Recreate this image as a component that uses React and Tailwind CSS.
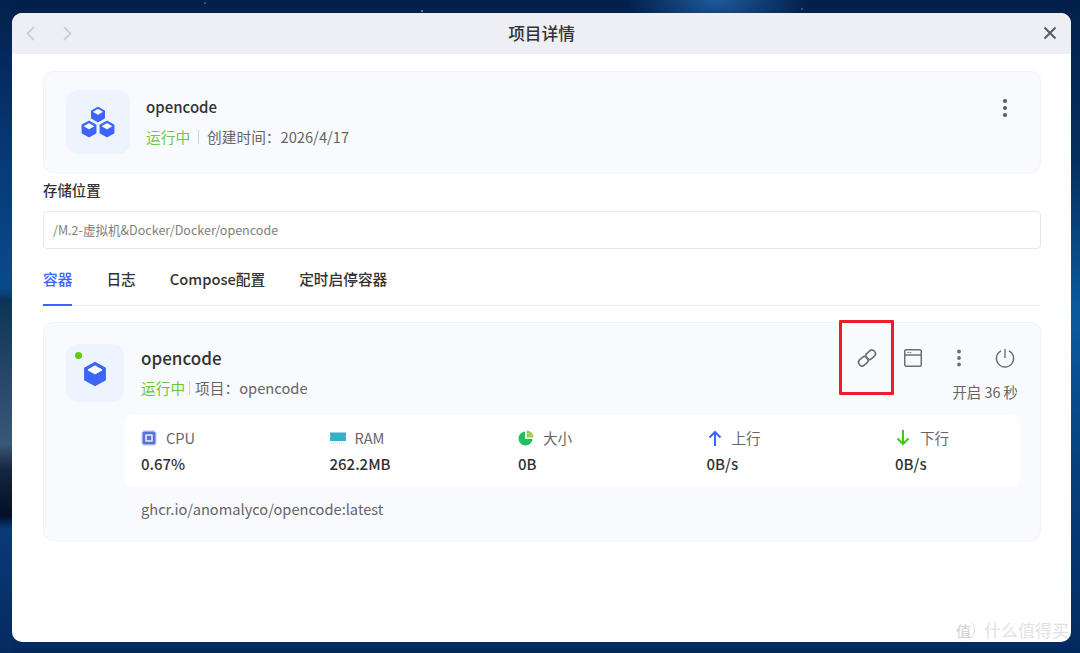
import React from "react";

const font = { fontFamily: '"Noto Sans CJK SC", "Noto Sans", sans-serif' };

function Cube({ x, y, s = 1 }) {
  return (
    <g transform={`translate(${x} ${y}) scale(${s})`}>
      <path d="M0 -9 L8 -4.5 V4.5 L0 9 L-8 4.5 V-4.5 Z" fill="#3d64fb" stroke="#3d64fb" strokeWidth="1.5" strokeLinejoin="round" />
      <path d="M0 -6.5 L5.6 -3.3 L0 0 L-5.6 -3.3 Z" fill="#fff" stroke="#fff" strokeWidth="0.8" strokeLinejoin="round" />
    </g>
  );
}

function Stat({ icon, label, value, className }) {
  return (
    <div className={className}>
      <div className="flex h-5 items-center gap-[9px] text-[14.6px] leading-5 text-[#666]">
        <span className="flex h-4 w-4 shrink-0 items-center justify-center">{icon}</span>
        <span>{label}</span>
      </div>
      <div className="mt-[6px] text-[15px] font-medium leading-5 text-[#333]">{value}</div>
    </div>
  );
}

const CpuIcon = (
  <svg width="16" height="16" viewBox="0 0 16 16">
    <path d="M3 0V16M5 0V16M7 0V16M9 0V16M11 0V16M13 0V16M0 3H16M0 5H16M0 7H16M0 9H16M0 11H16M0 13H16" stroke="#9fb0ee" strokeWidth="0.7" />
    <rect x="1.5" y="1.5" width="13" height="13" rx="1.5" fill="#5a72d8" />
    <rect x="4.2" y="4.2" width="7.6" height="7.6" rx="1" fill="#e4eafc" />
    <rect x="5.8" y="5.8" width="4.4" height="4.4" fill="#5a72d8" />
  </svg>
);
const RamIcon = (
  <svg width="16" height="16" viewBox="0 0 16 16">
    <path d="M0 2.5H16V5.5L15.2 6.4L16 7.3V11H0V7.3L0.8 6.4L0 5.5Z" fill="#35b1c6" />
    <path d="M1 13H15" stroke="#9fd8e2" strokeWidth="1.2" strokeDasharray="1 1" />
  </svg>
);
const PieIcon = (
  <svg width="16" height="16" viewBox="0 0 16 16">
    <path d="M7 1.5A7 7 0 1 0 14.5 9H7Z" fill="#1fc15e" />
    <path d="M8.6 0.5A7 7 0 0 1 15.5 7.4H8.6Z" fill="#9ed24a" />
  </svg>
);
const UpIcon = (
  <svg width="16" height="16" viewBox="0 0 16 16" fill="none" stroke="#3d64fb" strokeWidth="2">
    <path d="M8 16V2M2.5 7.5L8 2L13.5 7.5" />
  </svg>
);
const DownIcon = (
  <svg width="16" height="16" viewBox="0 0 16 16" fill="none" stroke="#3fc90f" strokeWidth="2">
    <path d="M8 0V14M2.5 8.5L8 14L13.5 8.5" />
  </svg>
);

export default function App() {
  return (
    <div
      style={font}
      className="relative h-[653px] w-[1080px] overflow-hidden bg-[radial-gradient(ellipse_90px_40px_at_717px_0px,#1d5a9a_0%,transparent_100%),radial-gradient(circle_1.5px_at_422px_11px,#8fd0ff_0%,transparent_100%),radial-gradient(circle_1px_at_205px_3px,#9cc4ee_0%,transparent_100%),radial-gradient(circle_1px_at_802px_9px,#9cc4ee_0%,transparent_100%),linear-gradient(180deg,#03204c_0%,#06305f_25%,#0a5aa0_48%,#07427f_70%,#032a60_100%)] pb-[11px] pl-[12px] pr-[9px] pt-[13px]"
    >
      {/* Wallpaper's darker band on the left */}
      <div className="absolute left-0 top-0 h-full w-[12px] bg-[linear-gradient(180deg,#03204c_0%,#073a78_25%,#0a4a8c_44%,#0b3558_46%,#2c4a6e_60%,#3a5778_68%,#14263f_72%,#020f28_79%,#0a3a78_81%,#052a60_100%)]" />

      <div className="relative flex h-[629px] w-[1059px] flex-col overflow-hidden rounded-[10px] bg-white">
        {/* Title bar */}
        <div className="relative flex h-[41px] shrink-0 items-center justify-between bg-[#eeeff4] pl-[11px] pr-[14px]">
          <div className="flex items-center gap-[22px] text-[#cfcfd3]">
            <svg width="15" height="17" viewBox="0 0 15 17" fill="none" stroke="currentColor" strokeWidth="1.8"><path d="M11 2L4.5 8.5L11 15" /></svg>
            <svg width="15" height="17" viewBox="0 0 15 17" fill="none" stroke="currentColor" strokeWidth="1.8"><path d="M4 2L10.5 8.5L4 15" /></svg>
          </div>
          <div className="absolute inset-x-0 top-0 text-center text-[16.7px] font-medium leading-[41px] text-[#333]">项目详情</div>
          <svg width="14" height="14" viewBox="0 0 14 14" fill="none" stroke="#5c5c5f" strokeWidth="2" className="-mt-[1px]"><path d="M1.5 1.5L12.5 12.5M12.5 1.5L1.5 12.5" /></svg>
        </div>

        {/* Body */}
        <div className="flex flex-col pl-[31px] pr-[30px] pt-[17px]">
          {/* Project card */}
          <div className="flex h-[102px] items-start rounded-[10px] border border-[#f0f2f7] bg-[#f9fafe] pl-[22px] pr-[32px] pt-[18px]">
            <div className="flex h-[64px] w-[64px] shrink-0 items-center justify-center rounded-[12px] bg-[#eef4fe]">
              <svg width="34" height="34" viewBox="0 0 34 34">
                <Cube x={17} y={9.5} s={0.8} />
                <Cube x={8} y={24} s={0.85} />
                <Cube x={26} y={24} s={0.85} />
              </svg>
            </div>
            <div className="ml-[16px] flex flex-1 flex-col">
              <div className="mt-[6px] text-[15px] font-medium leading-[22px] text-[#333]">opencode</div>
              <div className="mt-[9px] flex items-center text-[14.7px] leading-5 text-[#666]">
                <span className="text-[#6ccb3f]">运行中</span>
                <span className="mx-[8px] h-[14px] w-px bg-[#d4d4d4]" />
                <span>创建时间：2026/4/17</span>
              </div>
            </div>
            <svg width="6" height="20" viewBox="0 0 6 20" fill="#58585c" className="mt-[8px] shrink-0">
              <circle cx="3" cy="3" r="2" /><circle cx="3" cy="10" r="2" /><circle cx="3" cy="17" r="2" />
            </svg>
          </div>

          {/* Storage */}
          <div className="mt-[7px] text-[14.4px] font-medium leading-5 text-[#333]">存储位置</div>
          <div className="mt-[11px] flex h-[38px] items-center rounded-[4px] border border-[#e6e7eb] pl-[9px] text-[12.55px] text-[#808080]">
            /M.2-虚拟机&amp;Docker/Docker/opencode
          </div>

          {/* Tabs */}
          <div className="mt-[12px] flex h-[45px] gap-[34px] border-b border-[#eeeff2] text-[14.7px] font-medium text-[#333]">
            <div className="-mb-px flex h-[45px] items-center border-b-2 border-[#3d64fb] pb-[7px] text-[#3d64fb]">容器</div>
            <div className="flex h-[44px] items-center pb-[8px]">日志</div>
            <div className="flex h-[44px] items-center pb-[8px]">Compose配置</div>
            <div className="flex h-[44px] items-center pb-[8px]">定时启停容器</div>
          </div>

          {/* Container card */}
          <div className="mt-[16px] flex h-[219px] flex-col rounded-[10px] border border-[#f0f2f7] bg-[#f9fafe] pl-[22px] pr-[20px] pt-[21px]">
            <div className="flex h-[71px]">
              <div className="relative flex h-[58px] w-[58px] shrink-0 items-center justify-center rounded-[12px] bg-[#eef4fe]">
                <span className="absolute left-[9px] top-[8px] h-[7px] w-[7px] rounded-full bg-[#5fc90c]" />
                <svg width="24" height="26" viewBox="0 0 24 26" className="mt-[1px]"><Cube x={12} y={13} s={1.25} /></svg>
              </div>
              <div className="ml-[17px] flex flex-1 flex-col">
                <div className="mt-[1px] text-[17px] font-medium leading-[26px] text-[#333]">opencode</div>
                <div className="mt-[7px] flex items-center text-[14.7px] leading-5 text-[#666]">
                  <span className="text-[#66c92f]">运行中</span>
                  <span className="ml-[4px] mr-[5px] h-[14px] w-px bg-[#d4d4d4]" />
                  <span>项目：opencode</span>
                </div>
              </div>
              <div className="flex flex-col items-end">
                <div className="flex h-[28px] items-center gap-[16px] text-[#6f6f72]">
                  <span className="flex w-[30px] justify-center">
                    <svg width="22" height="22" viewBox="0 0 22 22" fill="none" stroke="currentColor" strokeWidth="1.6">
                      <g transform="rotate(-42 11 11)">
                        <rect x="1" y="7.5" width="10.2" height="7" rx="3.2" />
                        <rect x="10.8" y="7.5" width="10.2" height="7" rx="3.2" />
                      </g>
                    </svg>
                  </span>
                  <span className="flex w-[30px] justify-center">
                    <svg width="18" height="18" viewBox="0 0 18 18" fill="none" stroke="currentColor" strokeWidth="1.5">
                      <rect x="0.75" y="0.75" width="16.5" height="16.5" rx="1.5" />
                      <path d="M1 6H17" />
                      <path d="M3.5 3.5H8" strokeDasharray="1.2 0.9" strokeWidth="1.2" />
                    </svg>
                  </span>
                  <span className="flex w-[30px] justify-center">
                    <svg width="6" height="18" viewBox="0 0 6 18" fill="currentColor">
                      <circle cx="3" cy="2.5" r="1.9" /><circle cx="3" cy="9" r="1.9" /><circle cx="3" cy="15.5" r="1.9" />
                    </svg>
                  </span>
                  <span className="flex w-[30px] justify-center">
                    <svg width="20" height="20" viewBox="0 0 20 20" fill="none" stroke="currentColor" strokeWidth="1.4">
                      <path d="M10 1V10" />
                      <path d="M6 2.8A8.6 8.6 0 1 0 14 2.8" />
                    </svg>
                  </span>
                </div>
                <div className="mr-[2px] mt-[10px] text-[14.4px] leading-5 text-[#666]">开启 36 秒</div>
              </div>
            </div>

            <div className="ml-[59px] flex h-[72px] items-center rounded-[8px] bg-white pl-[16px]">
              <Stat className="w-[188.5px]" icon={CpuIcon} label="CPU" value="0.67%" />
              <Stat className="w-[188.5px]" icon={RamIcon} label="RAM" value="262.2MB" />
              <Stat className="w-[188.5px]" icon={PieIcon} label="大小" value="0B" />
              <Stat className="w-[188.5px]" icon={UpIcon} label="上行" value="0B/s" />
              <Stat className="w-[125px]" icon={DownIcon} label="下行" value="0B/s" />
            </div>

            <div className="ml-[75px] mt-[12px] text-[14.65px] leading-5 text-[#666]">ghcr.io/anomalyco/opencode:latest</div>
          </div>
        </div>
      </div>

      {/* Red annotation */}
      <div className="absolute left-[839px] top-[320px] h-[75px] w-[55px] rounded-[1px] border-[3px] border-[#ee1c25]" />

      {/* Watermark */}
      <div className="absolute left-[953px] top-[618px] flex items-center gap-[9px]">
        <span className="flex h-[22px] w-[22px] items-center justify-center rounded-full border-r border-[#ddd] text-[15px] leading-none text-[#cfcfcf]">值</span>
        <span className="text-[17px] leading-6 text-[#e2e2e2]">什么值得买</span>
      </div>
    </div>
  );
}
